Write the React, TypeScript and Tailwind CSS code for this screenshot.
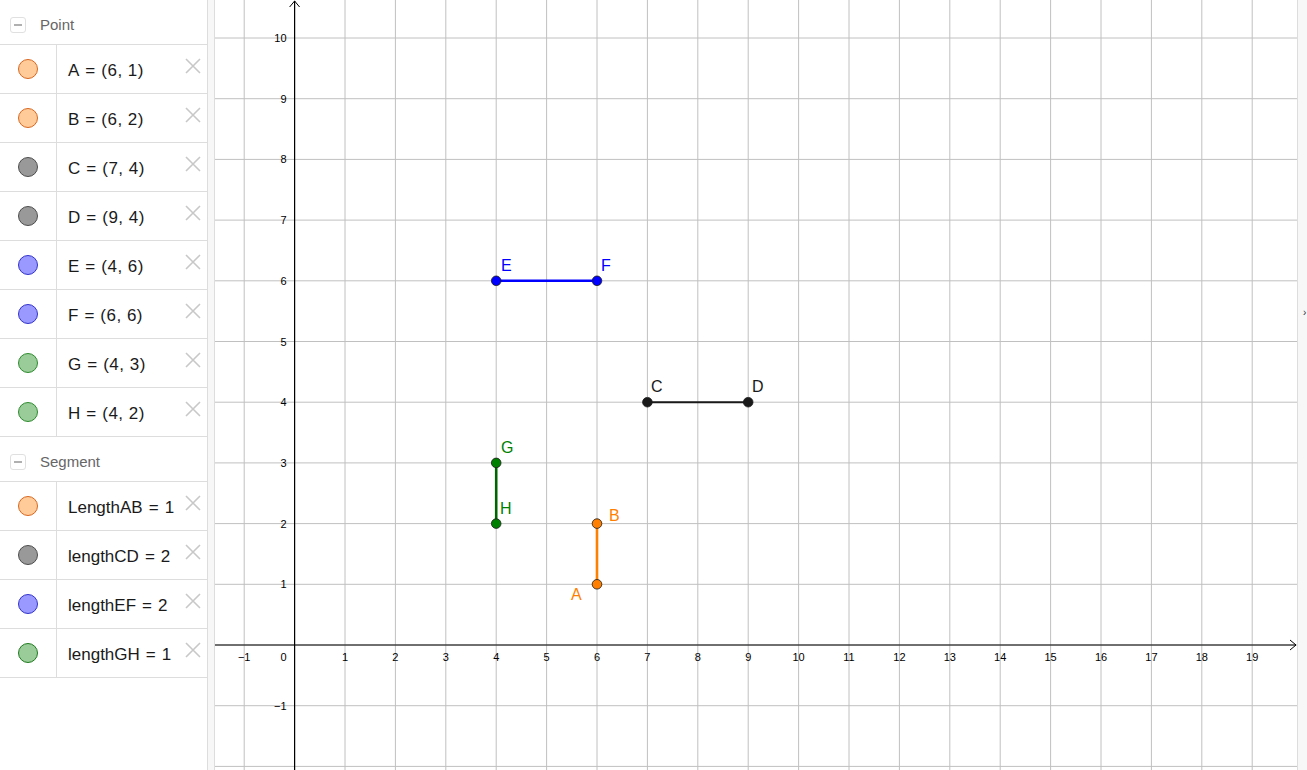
import React from 'react';

type Item = { name: string; value: string; fill: string; stroke: string };

const POINTS: Item[] = [
  { name: 'A', value: '(6, 1)', fill: '#ffcc99', stroke: '#d9661f' },
  { name: 'B', value: '(6, 2)', fill: '#ffcc99', stroke: '#d9661f' },
  { name: 'C', value: '(7, 4)', fill: '#999999', stroke: '#4d4d4d' },
  { name: 'D', value: '(9, 4)', fill: '#999999', stroke: '#4d4d4d' },
  { name: 'E', value: '(4, 6)', fill: '#9999ff', stroke: '#3333cc' },
  { name: 'F', value: '(6, 6)', fill: '#9999ff', stroke: '#3333cc' },
  { name: 'G', value: '(4, 3)', fill: '#99cc99', stroke: '#2e8b2e' },
  { name: 'H', value: '(4, 2)', fill: '#99cc99', stroke: '#2e8b2e' },
];

const SEGMENTS: Item[] = [
  { name: 'LengthAB', value: '1', fill: '#ffcc99', stroke: '#d9661f' },
  { name: 'lengthCD', value: '2', fill: '#999999', stroke: '#4d4d4d' },
  { name: 'lengthEF', value: '2', fill: '#9999ff', stroke: '#3333cc' },
  { name: 'lengthGH', value: '1', fill: '#99cc99', stroke: '#1f7a1f' },
];

// graph coordinates -> svg pixels (svg starts at page x = 215)
const X = (x: number) => 79.6 + 50.4 * x;
const Y = (y: number) => 645 - 60.7 * y;

function GroupHeader({ title, top }: { title: string; top?: boolean }) {
  return (
    <div className={`flex items-center pt-[6px] ${top ? 'h-[44px]' : 'h-[45px] border-t border-[#dddddd]'}`}>
      <div className="ml-[10px] w-[16px] h-[16px] rounded-[3px] border border-[#e0e0e0] flex items-center justify-center">
        <div className="w-[8px] h-[1.5px] bg-[#b0b0b0]" />
      </div>
      <span className="ml-[14px] text-[15px] text-[#666666]">{title}</span>
    </div>
  );
}

function Row({ item }: { item: Item }) {
  return (
    <div className="h-[49px] border-t border-[#dddddd] flex relative">
      <div className="w-[57px] border-r border-[#dddddd] flex items-center justify-center shrink-0">
        <div
          className="w-[20px] h-[20px] rounded-full border"
          style={{ backgroundColor: item.fill, borderColor: item.stroke }}
        />
      </div>
      <div className="flex items-center pl-[11px] pt-[3px] text-[17px] text-[#1a1a1a] whitespace-nowrap">
        <span>{item.name}</span>
        <span className="mx-[6px]">=</span>
        <span className="tracking-[0.5px]">{item.value}</span>
      </div>
      <svg className="absolute right-[6px] top-[13px]" width="16" height="16" viewBox="0 0 16 16">
        <path d="M1 1 L15 15 M15 1 L1 15" stroke="#c8c8c8" strokeWidth="1.6" />
      </svg>
    </div>
  );
}

function Graph() {
  const xs = Array.from({ length: 21 }, (_, i) => i - 1);
  const ys = Array.from({ length: 13 }, (_, i) => i - 2);
  const pt = (x: number, y: number, fill: string, key: string) => (
    <circle key={key} cx={X(x)} cy={Y(y)} r={4.8} fill={fill} stroke="#1a1a1a" strokeWidth={0.8} />
  );
  return (
    <svg width="1082" height="770" className="block" style={{ fontFamily: '"Liberation Sans", Arial, sans-serif' }}>
      {xs.map(x => (
        <line key={'vx' + x} x1={X(x)} x2={X(x)} y1={0} y2={770} stroke="#c0c0c0" strokeWidth={1} />
      ))}
      {ys.map(y => (
        <line key={'hy' + y} x1={0} x2={1082} y1={Y(y)} y2={Y(y)} stroke="#c0c0c0" strokeWidth={1} />
      ))}
      {/* axes */}
      <line x1={0} x2={1081} y1={Y(0)} y2={Y(0)} stroke="#000" strokeWidth={1.2} />
      <path d={`M1075 ${Y(0) - 5} L1081 ${Y(0)} L1075 ${Y(0) + 5}`} fill="none" stroke="#000" strokeWidth={1} />
      <line x1={X(0)} x2={X(0)} y1={1} y2={770} stroke="#000" strokeWidth={1.2} />
      <path d={`M${X(0) - 5} 7 L${X(0)} 1 L${X(0) + 5} 7`} fill="none" stroke="#000" strokeWidth={1} />
      {/* x labels */}
      {xs.filter(x => x !== 0).map(x => (
        <text key={'lx' + x} x={X(x)} y={Y(0) + 16} fontSize={11} textAnchor="middle" fill="#000">
          {x < 0 ? '\u2212' + Math.abs(x) : x}
        </text>
      ))}
      <text x={X(0) - 8} y={Y(0) + 16} fontSize={11} textAnchor="end" fill="#000">0</text>
      {ys.filter(y => y !== 0 && y >= -1).map(y => (
        <text key={'ly' + y} x={X(0) - 8} y={Y(y) + 4} fontSize={11} textAnchor="end" fill="#000">
          {y < 0 ? '\u2212' + Math.abs(y) : y}
        </text>
      ))}
      {/* segments */}
      <line x1={X(4)} y1={Y(6)} x2={X(6)} y2={Y(6)} stroke="#0000ff" strokeWidth={2.6} />
      <line x1={X(7)} y1={Y(4)} x2={X(9)} y2={Y(4)} stroke="#1a1a1a" strokeWidth={2} />
      <line x1={X(4)} y1={Y(3)} x2={X(4)} y2={Y(2)} stroke="#006400" strokeWidth={2.6} />
      <line x1={X(6)} y1={Y(2)} x2={X(6)} y2={Y(1)} stroke="#ff7f00" strokeWidth={2.6} />
      {/* points */}
      {pt(4, 6, '#0000ff', 'E')}
      {pt(6, 6, '#0000ff', 'F')}
      {pt(7, 4, '#1a1a1a', 'C')}
      {pt(9, 4, '#1a1a1a', 'D')}
      {pt(4, 3, '#008000', 'G')}
      {pt(4, 2, '#008000', 'H')}
      {pt(6, 2, '#ff7f00', 'B')}
      {pt(6, 1, '#ff7f00', 'A')}
      {/* labels */}
      <g fontSize={16}>
        <text x={286} y={271} fill="#0000ff">E</text>
        <text x={386} y={271} fill="#0000ff">F</text>
        <text x={436} y={392} fill="#1a1a1a">C</text>
        <text x={537} y={392} fill="#1a1a1a">D</text>
        <text x={286} y={453} fill="#008000">G</text>
        <text x={285} y={514} fill="#008000">H</text>
        <text x={394} y={521} fill="#ff7f00">B</text>
        <text x={356} y={600} fill="#ff7f00">A</text>
      </g>
    </svg>
  );
}

export default function App() {
  return (
    <div
      className="flex w-[1307px] h-[770px] overflow-hidden bg-white"
      style={{ fontFamily: '"Liberation Sans", Arial, sans-serif' }}
    >
      <div className="w-[207px] shrink-0 flex flex-col">
        <GroupHeader title="Point" top />
        {POINTS.map(p => <Row key={p.name} item={p} />)}
        <GroupHeader title="Segment" />
        {SEGMENTS.map(s => <Row key={s.name} item={s} />)}
        <div className="border-t border-[#dddddd]" />
      </div>
      <div className="w-[8px] shrink-0 bg-[#f7f7f7] border-x border-[#dddddd]" />
      <div className="flex-1 min-w-0">
        <Graph />
      </div>
      <div className="w-[10px] shrink-0 bg-[#f7f7f7] border-l border-[#dddddd] relative">
        <span className="absolute left-[5px] top-[305px] text-[10px] text-[#333]">›</span>
      </div>
    </div>
  );
}
